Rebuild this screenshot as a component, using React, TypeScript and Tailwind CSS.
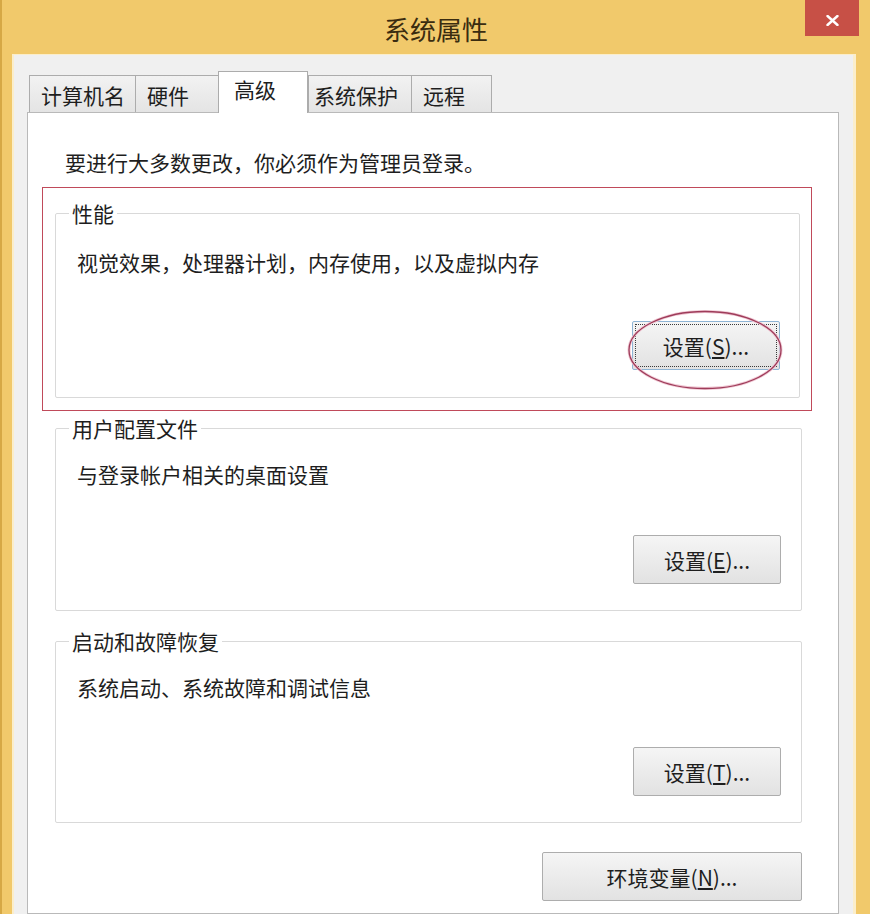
import React from "react";

const tabs = [
  { label: "计算机名", w: "w-[106px]", pl: "pl-[11px]", active: false },
  { label: "硬件", w: "w-[83px]", pl: "pl-[11px]", active: false },
  { label: "高级", w: "w-[90px]", pl: "pl-[15px]", active: true },
  { label: "系统保护", w: "w-[103px]", pl: "pl-[5px]", active: false },
  { label: "远程", w: "w-[81px]", pl: "pl-[11px]", active: false },
];

function WinButton({
  children,
  focused = false,
  wide = false,
}: {
  children: React.ReactNode;
  focused?: boolean;
  wide?: boolean;
}) {
  return (
    <button
      className={
        (wide ? "w-[260px] " : "w-[148px] ") +
        "h-[49px] rounded-[2px] border bg-linear-to-b from-[#f5f5f5] to-[#e2e2e2] text-[21px] leading-[24px] text-[#1e1e1e] flex items-center justify-center " +
        (focused
          ? "border-[#8fb4d4] outline-1 outline-dotted outline-offset-[-4px] outline-[#3a3a3a]"
          : "border-[#adadad]")
      }
    >
      {children}
    </button>
  );
}

function Group({
  title,
  desc,
  button,
  pt,
  mt,
  pb,
  pr = "pr-[20px]",
}: {
  title: string;
  desc: string;
  button: React.ReactNode;
  pt: string;
  mt: string;
  pb: string;
  pr?: string;
}) {
  return (
    <fieldset className={"border border-[#d9d9d9] rounded-[2px] pl-[21px] " + pr + " " + pt + " " + pb}>
      <legend className="ml-[-8px] px-[3px] text-[21px] leading-[24px] text-[#1e1e1e]">{title}</legend>
      <div className="text-[21px] leading-[24px] text-[#1e1e1e]">{desc}</div>
      <div className={"flex justify-end " + mt}>{button}</div>
    </fieldset>
  );
}

export default function App() {
  return (
    <div className="w-[870px] h-[914px] overflow-hidden bg-[#f1c96b] border-l-[2px] border-[#d6a845] flex flex-col font-['Noto_Sans_CJK_SC',sans-serif]">
      {/* Title bar */}
      <div className="h-[54px] shrink-0 grid grid-cols-[1fr_auto_1fr]">
        <div />
        <div className="pt-[4px] flex items-center text-[26px] leading-[30px] text-[#3a2c10]">系统属性</div>
        <div className="flex justify-end items-start">
          <div className="mr-[11px] w-[54px] h-[36px] bg-[#c75046] flex items-center justify-center pt-[5px]">
            <svg width="13" height="11" viewBox="0 0 13 11">
              <path d="M1.5 1 L11.5 10 M11.5 1 L1.5 10" stroke="#ffffff" strokeWidth="2.4" strokeLinecap="round" />
            </svg>
          </div>
        </div>
      </div>

      {/* Body */}
      <div className="flex-1 ml-[10px] mr-[14px] border-l-[2px] border-r-[3px] border-t border-[#fbeecb] bg-[#f0f0f0] pl-[13px] pr-[14px] flex flex-col">
        {/* Tabs */}
        <div className="mt-[16px] flex items-end pl-[2px] relative z-10">
          {tabs.map((t) =>
            t.active ? (
              <div
                key={t.label}
                className={t.w + " " + t.pl + " h-[42px] mb-[-1px] bg-white border border-b-0 border-[#acacac] pt-[5px] text-[21px] leading-[24px] text-[#1e1e1e]"}
              >
                {t.label}
              </div>
            ) : (
              <div
                key={t.label}
                className={t.w + " " + t.pl + " h-[37px] bg-linear-to-b from-[#f2f2f2] to-[#e4e4e4] border border-b-0 border-r-0 last:border-r border-[#acacac] pt-[7px] text-[21px] leading-[24px] text-[#1e1e1e]"}
              >
                {t.label}
              </div>
            )
          )}
        </div>

        {/* Panel */}
        <div className="flex-1 bg-white border border-[#b9b9b9] pl-[27px] pr-[36px] pt-[37px] flex flex-col">
          <div className="pl-[10px] text-[21px] leading-[24px] text-[#1e1e1e]">
            要进行大多数更改，你必须作为管理员登录。
          </div>

          {/* Red annotation box */}
          <div className="mt-[13px] ml-[-13px] mr-[-10px] border border-[#c04a5a] pl-[12px] pr-[11px] pt-[13px] pb-[12px]">
            <Group
              title="性能"
              desc="视觉效果，处理器计划，内存使用，以及虚拟内存"
              pt="pt-[25px]"
              mt="mt-[47px]"
              pb="pb-[27px]"
              pr="pr-[19px]"
              button={
                <div className="relative">
                  <WinButton focused>
                    <span>
                      设置(<u>S</u>)...
                    </span>
                  </WinButton>
                  <svg
                    className="absolute left-[-5px] top-[-11px] pointer-events-none"
                    width="156"
                    height="80"
                    viewBox="0 0 156 80"
                  >
                    <ellipse cx="78" cy="40" rx="76" ry="38.5" fill="none" stroke="#f0c8d4" strokeWidth="3" />
                    <ellipse cx="78" cy="40" rx="76" ry="38.5" fill="none" stroke="#9e3c5a" strokeWidth="1.3" />
                  </svg>
                </div>
              }
            />
          </div>

          <div className="mt-[5px]">
            <Group
              title="用户配置文件"
              desc="与登录帐户相关的桌面设置"
              pt="pt-[22px]"
              mt="mt-[49px]"
              pb="pb-[26px]"
              button={
                <WinButton>
                  <span>
                    设置(<u>E</u>)...
                  </span>
                </WinButton>
              }
            />
          </div>

          <div className="mt-[18px]">
            <Group
              title="启动和故障恢复"
              desc="系统启动、系统故障和调试信息"
              pt="pt-[22px]"
              mt="mt-[48px]"
              pb="pb-[26px]"
              button={
                <WinButton>
                  <span>
                    设置(<u>T</u>)...
                  </span>
                </WinButton>
              }
            />
          </div>

          <div className="mt-[29px] flex justify-end">
            <WinButton wide>
              <span>
                环境变量(<u>N</u>)...
              </span>
            </WinButton>
          </div>
        </div>
      </div>
    </div>
  );
}
